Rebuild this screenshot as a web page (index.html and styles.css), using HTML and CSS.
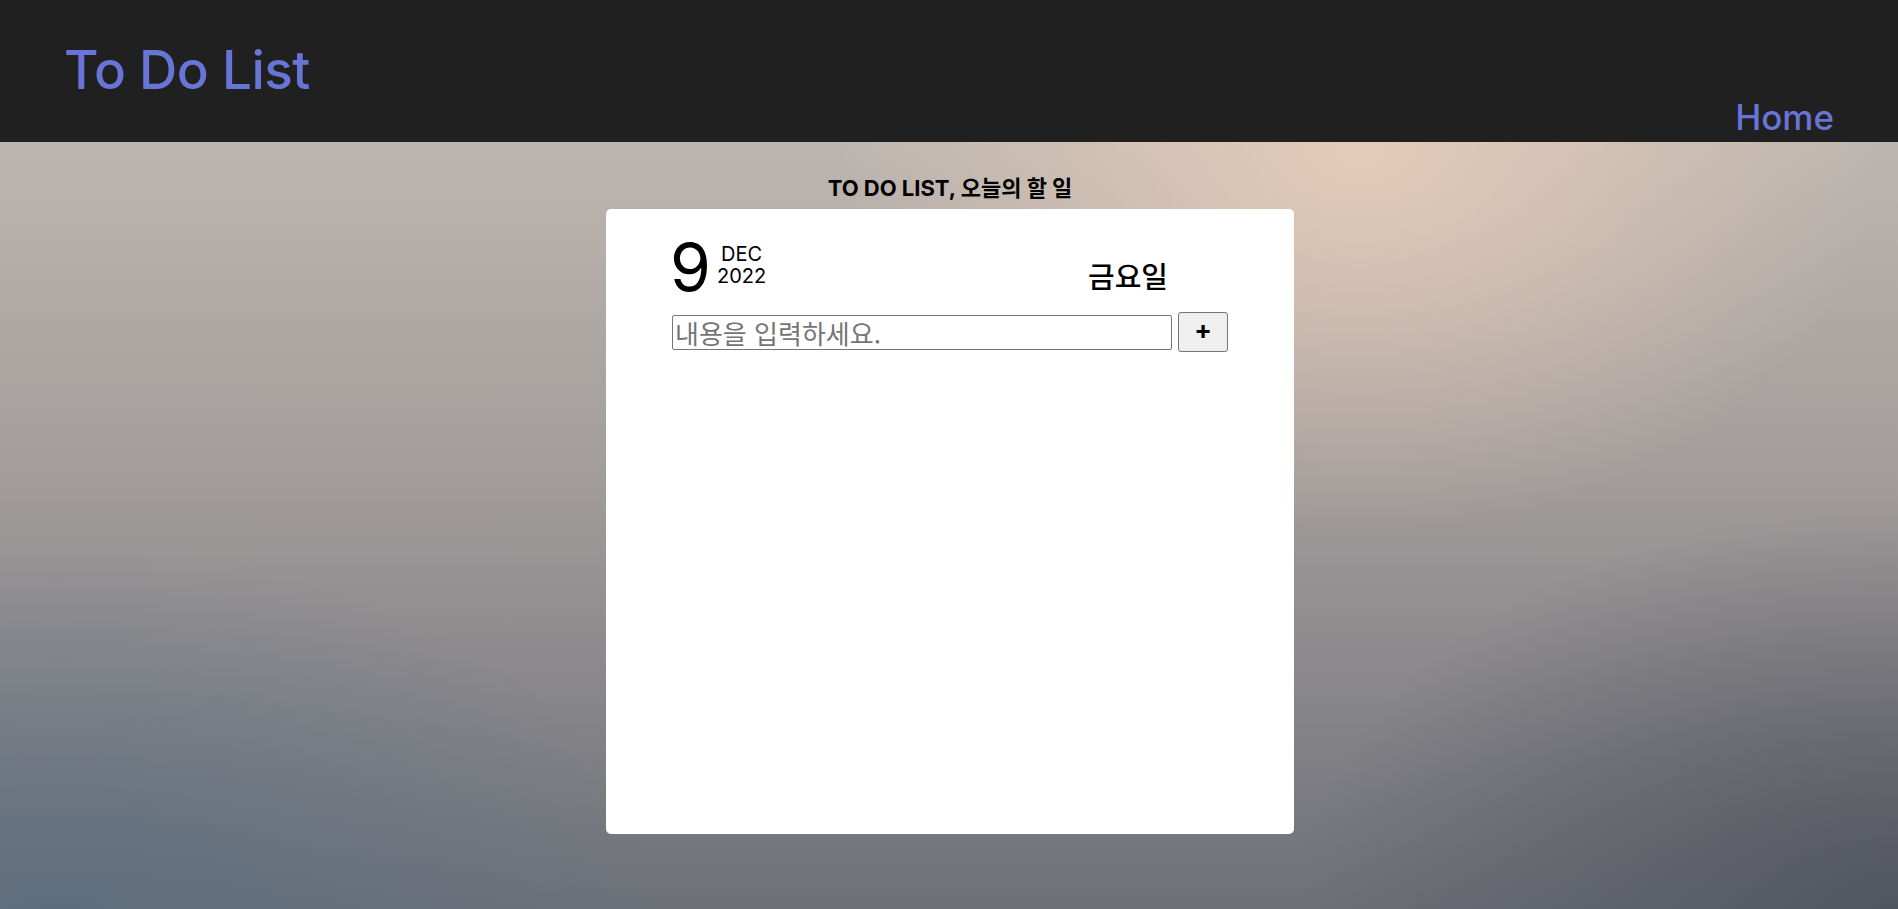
FILE: index.html
```html
<!DOCTYPE html>
<html lang="ko">
<head>
<meta charset="utf-8">
<title>To Do List</title>
<link rel="stylesheet" href="styles.css">
</head>
<body>
<header class="topbar">
  <h1 class="logo">To Do List</h1>
  <nav class="nav"><a class="nav-link" href="#">Home</a></nav>
</header>
<main class="main">
  <h2 class="subtitle">TO DO LIST, 오늘의 할 일</h2>
  <section class="card">
    <div class="date-row">
      <div class="date">
        <span class="day-num">9</span>
        <div class="month-year">
          <span class="month">DEC</span>
          <span class="year">2022</span>
        </div>
      </div>
      <div class="weekday">금요일</div>
    </div>
    <form class="add-row">
      <input class="todo-input" type="text" placeholder="내용을 입력하세요.">
      <button class="add-btn" type="button">+</button>
    </form>
  </section>
</main>
</body>
</html>
```

FILE: styles.css
```css
* { box-sizing: border-box; }
html, body { height: 100%; }
body {
  margin: 0;
  font-family: Inter, "Noto Sans CJK KR", sans-serif;
  background:
    radial-gradient(ellipse 520px 380px at 1360px 150px, rgba(236,207,186,0.85), rgba(236,207,186,0) 100%),
    radial-gradient(ellipse 600px 360px at 60px 909px, rgba(84,108,130,0.6), rgba(84,108,130,0) 100%),
    radial-gradient(ellipse 600px 400px at 1898px 909px, rgba(72,76,86,0.75), rgba(72,76,86,0) 100%),
    linear-gradient(180deg, #bdb6b0 140px, #a29c9b 480px, #6d7078 909px);
  min-height: 909px;
  overflow: hidden;
}
.topbar {
  height: 142px;
  background: #202020;
  display: flex;
  justify-content: space-between;
  align-items: flex-start;
  padding: 0 64px 0 64px;
}
.logo {
  margin: 38px 0 0 0;
  font-size: 53px;
  font-weight: 500;
  color: #6874d6;
  letter-spacing: -0.5px;
  line-height: 64px;
}
.nav { align-self: flex-end; padding-bottom: 3px; }
.nav-link {
  font-size: 35px;
  font-weight: 500;
  color: #6874d6;
  text-decoration: none;
  line-height: 44px;
}
.main {
  display: flex;
  flex-direction: column;
  align-items: center;
  padding-left: 2px;
}
.subtitle {
  margin: 28px 0 0 0;
  font-size: 22px;
  font-weight: 700;
  color: #000;
  line-height: 36px;
  letter-spacing: 0;
  padding-bottom: 3px;
}
.card {
  width: 688px;
  height: 625px;
  background: #fff;
  border-radius: 5px;
  padding: 28px 0 0 64px;
}
.date-row {
  display: flex;
  align-items: center;
  width: 500px;
}
.date { display: flex; align-items: center; }
.day-num {
  font-size: 66px;
  line-height: 60px;
  font-weight: 400;
  color: #000;
}
.month-year {
  display: flex;
  flex-direction: column;
  align-items: center;
  margin-left: 6px;
  margin-top: -4px;
  font-size: 20px;
  line-height: 22px;
}
.weekday {
  margin-left: auto;
  margin-top: 16px;
  font-size: 29px;
  font-weight: 500;
  color: #000;
  margin-right: 2px;
}
.add-row {
  display: flex;
  align-items: center;
  gap: 6px;
  margin: 15px 0 0 2px;
}
.todo-input {
  width: 500px;
  height: 35px;
  border: 1px solid #767676;
  border-radius: 2px;
  padding: 0 2px;
  font-family: "Noto Sans CJK KR", sans-serif;
  font-size: 26px;
}
.todo-input::placeholder { color: #757575; }
.add-btn {
  width: 50px;
  height: 40px;
  background: #efefef;
  border: 1px solid #767676;
  border-radius: 3px;
  font-size: 26px;
  font-weight: 700;
  line-height: 1;
  padding: 0 0 4px;
  color: #000;
  font-family: Inter, sans-serif;
}
```
